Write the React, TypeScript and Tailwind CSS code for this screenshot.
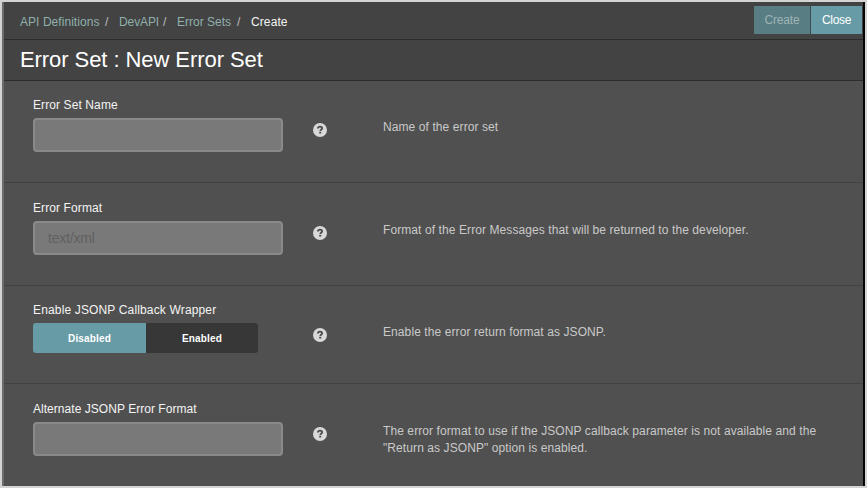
import type { ReactNode } from 'react';

function HelpIcon() {
  return (
    <svg viewBox="0 0 14 14" className="block h-3.5 w-3.5 shrink-0" aria-label="Help">
      <circle cx="7" cy="7" r="7" fill="#d8d8d8" />
      <path d="M4.9 5.5C5 4.2 5.9 3.7 7 3.7c1.2 0 2.1.6 2.1 1.6 0 1.4-1.8 1.3-1.9 2.6" fill="none" stroke="#484848" strokeWidth="1.8" />
      <rect x="6.2" y="8.8" width="2" height="1.7" fill="#484848" />
    </svg>
  );
}

type FieldProps = {
  label: string;
  help: ReactNode;
  className: string;
  labelClassName?: string;
  children: ReactNode;
};

function Field({ label, help, className, labelClassName = '', children }: FieldProps) {
  return (
    <section className={`flex shrink-0 border-b border-[#424242] pl-[29px] ${className}`}>
      <div className="w-[280px] pt-[17px]">
        <label className={`block h-5 text-[12px] leading-[15px] text-[#f4f4f4] ${labelClassName}`}>{label}</label>
        {children}
      </div>
      <div className="w-[70px] pt-[42px]">
        <HelpIcon />
      </div>
      <p className="pt-[38px] text-[12px] leading-[17px] tracking-[0.09px] whitespace-nowrap text-[#c9c9c9]">{help}</p>
    </section>
  );
}

function TextInput({ placeholder }: { placeholder?: string }) {
  return (
    <input
      type="text"
      placeholder={placeholder}
      className="block h-[34px] w-[250px] rounded border-2 border-[#8a8a8a] bg-[#797979] px-[13px] text-[14px] tracking-[-0.2px] text-white outline-none placeholder:text-[#606060]"
    />
  );
}

function Crumb({ children, className }: { children: ReactNode; className: string }) {
  return (
    <li className={`flex ${className}`}>
      <a className="flex-1 whitespace-nowrap text-[#8fb0ac]">{children}</a>
      <span className="w-[14px] text-[#bdbdbd]">/</span>
    </li>
  );
}

export default function App() {
  return (
    <div className="h-[488px] w-[867px] overflow-hidden bg-[#d4d4d4] p-[2px] font-['Liberation_Sans',Arial,sans-serif]">
      <div className="flex h-full flex-col overflow-hidden border-r-2 border-l-2 border-r-[#050505] border-l-[#6c6c6c] bg-[#505050]">
        <header className="flex h-[38px] shrink-0 items-start justify-between border-b border-[#2c2c2c] bg-[#434343]">
          <ol className="flex pt-[13px] pl-4 text-[12px] leading-[15px]">
            <Crumb className="w-[99px] tracking-[0.05px]">API Definitions</Crumb>
            <Crumb className="w-[58px] tracking-[-0.1px]">DevAPI</Crumb>
            <Crumb className="w-[74px]">Error Sets</Crumb>
            <li className="tracking-[0.1px] text-[#f4f4f4]">Create</li>
          </ol>
          <div className="mt-1 mr-px flex gap-px bg-[#3b4b4e] text-[12px]">
            <button className="h-7 w-14 bg-[#587d82] tracking-[-0.5px] text-[#9fb4b6]">
              <span className="tracking-[-0.2px]">Create</span>
            </button>
            <button className="h-7 w-[51px] bg-[#679ca6] tracking-[-0.3px] text-white">Close</button>
          </div>
        </header>
        <h1 className="h-[41px] shrink-0 border-b border-[#2c2c2c] bg-[#434343] pt-[5px] pl-4 text-[22px] leading-[29px] tracking-[-0.07px] text-white">
          Error Set : New Error Set
        </h1>
        <Field label="Error Set Name" help="Name of the error set" className="h-[102px]" labelClassName="tracking-[0.1px]">
          <TextInput />
        </Field>
        <Field
          label="Error Format"
          help="Format of the Error Messages that will be returned to the developer."
          className="h-[103px] pt-px"
          labelClassName="tracking-[0.1px]"
        >
          <TextInput placeholder="text/xml" />
        </Field>
        <Field
          label="Enable JSONP Callback Wrapper"
          help="Enable the error return format as JSONP."
          className="h-[98px]"
          labelClassName="tracking-[0.15px]"
        >
          <div className="flex h-[30px] w-[225px] overflow-hidden rounded-[3px] text-[10px] font-bold tracking-[0.15px] text-white">
            <button className="w-[113px] bg-[#679ca6]">Disabled</button>
            <button className="flex-1 bg-[#373737]">Enabled</button>
          </div>
        </Field>
        <Field
          label="Alternate JSONP Error Format"
          help={
            <>
              The error format to use if the JSONP callback parameter is not available and the
              <br />
              "Return as JSONP" option is enabled.
            </>
          }
          className="h-[110px] pt-px"
          labelClassName="tracking-[0.04px]"
        >
          <TextInput />
        </Field>
      </div>
    </div>
  );
}
